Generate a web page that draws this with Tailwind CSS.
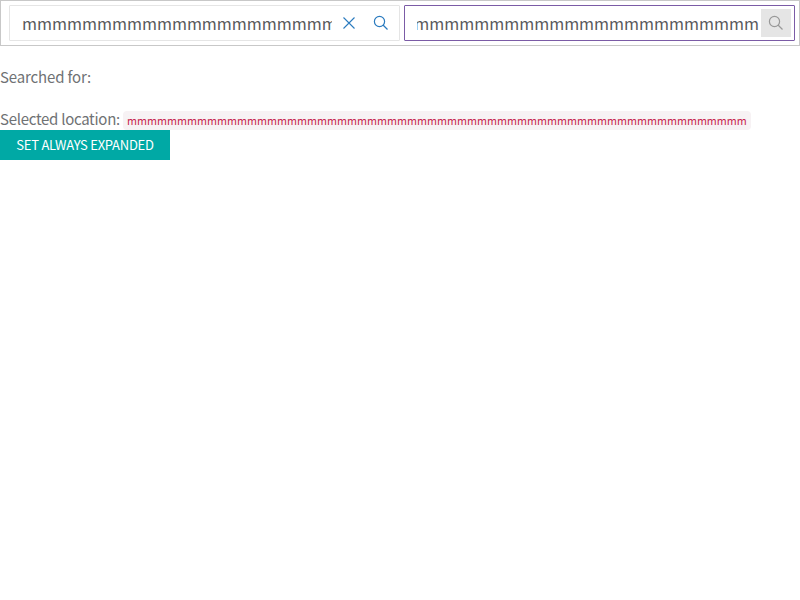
<!DOCTYPE html>
<html lang="en"><head><meta charset="utf-8"><title>Search</title>
<script src="https://cdn.jsdelivr.net/npm/@tailwindcss/browser@4"></script></head>
<body class="bg-white font-['Noto_Sans_CJK_SC',sans-serif] text-[15px] leading-[24px] text-[#6f7274]">
<header class="flex h-[46px] gap-1 border border-[#c8c8c8] py-1 pl-2 pr-1">
<div class="flex h-9 w-[391px] border border-[#e5e5e5] pl-3 rounded-[1px]">
<div class="w-[310px] overflow-hidden whitespace-nowrap text-[16.2px] leading-[35px] text-[#58595b]">mmmmmmmmmmmmmmmmmmmmm</div>
<svg class="ml-[10px] mt-[10px] h-3.5 w-3.5 shrink-0" viewBox="0 0 14 14" fill="none" stroke="#2b7bbf" stroke-width="1.1"><path d="M1.5 1.5l11 11M12.5 1.5l-11 11"/></svg>
<svg class="ml-[17px] mt-[9px] h-4 w-4 shrink-0" viewBox="0 0 16 16" fill="none" stroke="#2b7bbf" stroke-width="1.2"><circle cx="6.5" cy="6.5" r="5.1"/><path d="M10 10l4.5 4.5"/></svg>
</div>
<div class="flex h-9 w-[391px] rounded-[1px] border border-[#7b5ba6] pl-3">
<div class="flex w-[342px] justify-end overflow-hidden whitespace-nowrap text-[16.2px] leading-[35px] text-[#58595b]"><span>mmmmmmmmmmmmmmmmmmmmmmm</span></div>
<div class="ml-[2px] mt-[3px] flex h-7 w-[30px] items-center justify-center bg-[#e5e5e5]"><svg class="h-4 w-4" viewBox="0 0 16 16" fill="none" stroke="#999" stroke-width="1.2"><circle cx="6.5" cy="6.5" r="5.1"/><path d="M10 10l4.5 4.5"/></svg></div>
</div>
</header>
<main class="pt-[19px]">
<p class="tracking-[-0.15px]">Searched for:</p>
<div class="mt-[18px] flex h-[23px] whitespace-nowrap"><span class="w-[123px] tracking-[-0.28px]">Selected location:</span><code class="mt-1 h-[19px] w-[628px] rounded-[4px] bg-[#f7f2f4] px-1 text-[10.8px] leading-[19px] text-[#c7254e] font-['Noto_Sans_CJK_SC',sans-serif]">mmmmmmmmmmmmmmmmmmmmmmmmmmmmmmmmmmmmmmmmmmmmmmmmmmmmmmmmmmmmmm</code></div>
<button class="block h-[30px] w-[170px] bg-[#00a9a5] text-[13px] tracking-[-0.25px] leading-[30px] text-white">SET ALWAYS EXPANDED</button>
</main>
</body></html>
